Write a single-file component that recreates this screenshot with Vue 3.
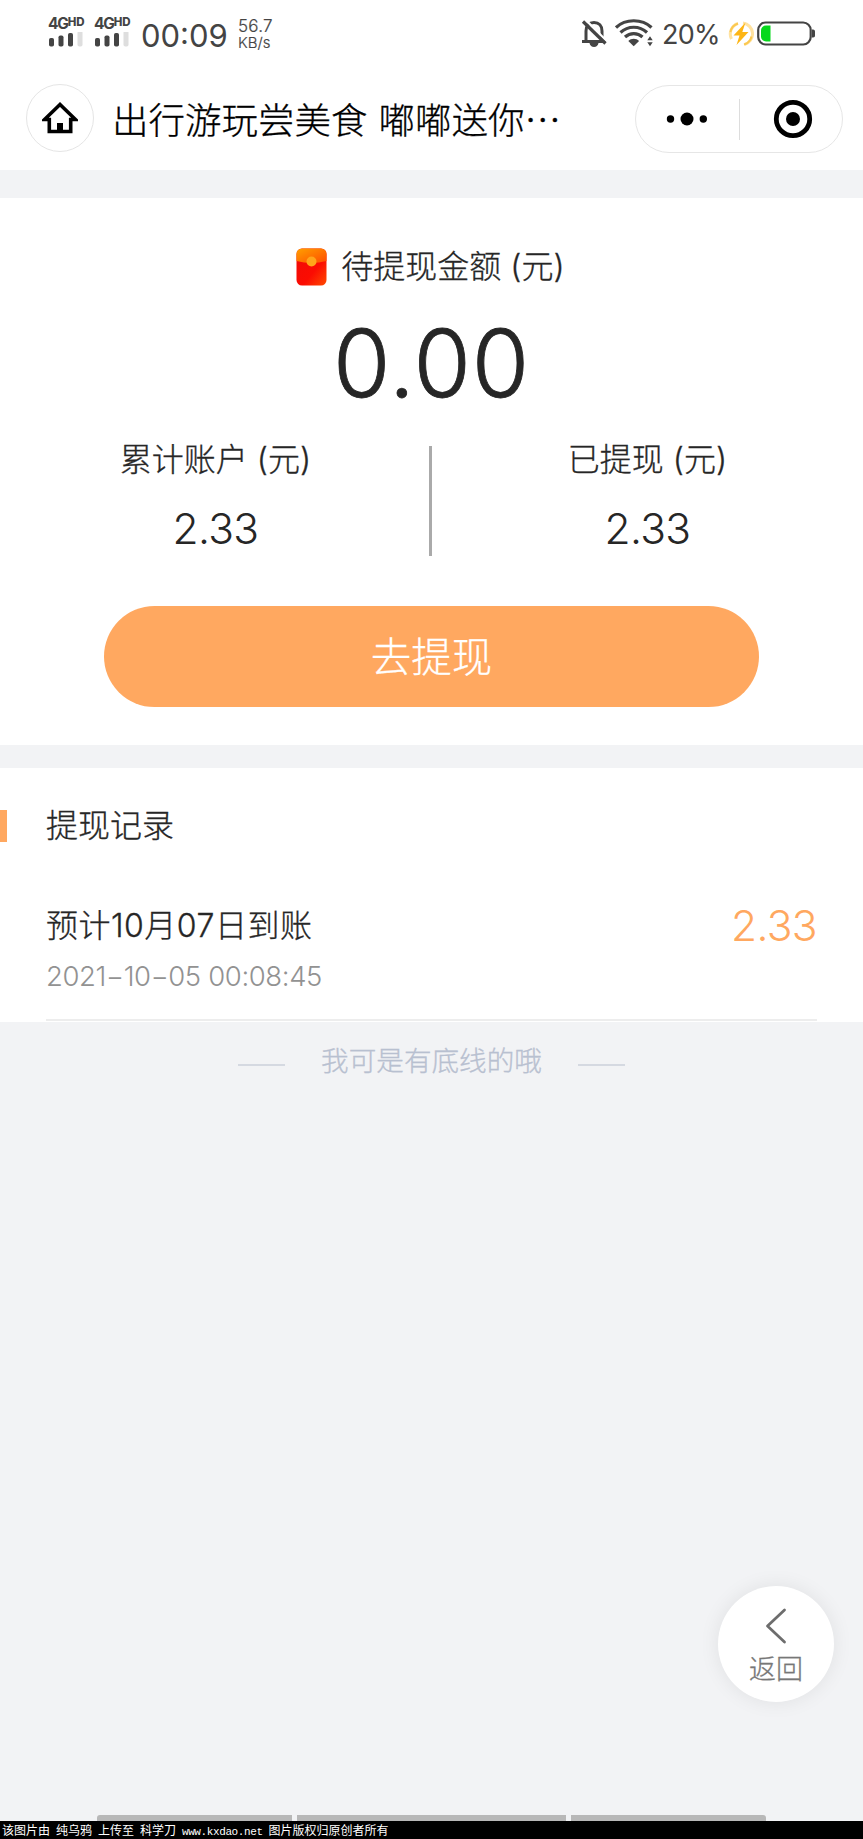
<script setup>
const totals = [
  { label: '累计账户 (元)', value: '2.33' },
  { label: '已提现 (元)', value: '2.33' }
]
const records = [{ title: '预计10月07日到账', time: '2021−10−05 00:08:45', amount: '2.33' }]
</script>

<template>
  <div class="page">
    <header class="status">
      <div v-for="n in 2" :key="n" class="signal">
        <div class="net">4G<sup>HD</sup></div>
        <svg width="36" height="15" viewBox="0 0 36 15">
          <rect x="1" y="6" width="5" height="8.500" rx="1.800" fill="#444" />
          <rect x="10.500" y="3.500" width="5" height="11" rx="1.800" fill="#444" />
          <rect x="20" y="1" width="5" height="13.500" rx="1.800" fill="#444" />
          <rect x="29.500" y="-1" width="5" height="15.500" rx="1.800" fill="#dedede" />
        </svg>
      </div>
      <div class="clock">00:09</div>
      <div class="speed"><span>56.7</span><span>KB/s</span></div>
      <div class="grow"></div>
      <svg class="bell" width="26" height="28" viewBox="0 0 26 28" fill="none" stroke="#444" stroke-width="3">
        <path d="M5 21V11c0-5 3-8.500 8-8.500s8 3.500 8 8.500v10" />
        <path d="M1 21.500h24" />
        <path d="M8.500 23h9c-.5 2.600-2.200 4-4.500 4s-4-1.400-4.500-4z" fill="#444" stroke="none" />
        <path d="M2.500 1.500l22 22" stroke="#fff" stroke-width="2.500" transform="translate(1.800 -1.800)" />
        <path d="M2 1.500l22.500 22" stroke-width="3.200" />
      </svg>
      <svg class="wifi" width="38" height="28" viewBox="0 0 38 28" fill="none" stroke="#444" stroke-width="3.200">
        <path d="M1 8.500C10.500-.5 27-.5 36.500 8.500" />
        <path d="M5.500 13.500c7.500-7 19-7 26.500 0" />
        <path d="M10 18c5-4.500 12.500-4.500 17.500 0" />
        <path d="M13.300 22c3-2.900 7.800-2.900 10.800 0l-5.400 5.200z" fill="#444" stroke="none" />
        <path d="M32.300 21.300l2.700-4 2.700 4zM32.300 23.300l2.700 4 2.700-4z" fill="#444" stroke="none" />
      </svg>
      <div class="percent">20%</div>
      <svg class="bolt" width="26" height="26" viewBox="0 0 26 26" fill="none">
        <path d="M10 2.500A11 11 0 0 0 3.500 18" stroke="#ffe2a0" stroke-width="3" />
        <path d="M15 2a11 11 0 0 1 1.500 21.500" stroke="#ffe2a0" stroke-width="3" />
        <path d="M10 2.500A11 11 0 0 0 2.500 11M16 23.500a11 11 0 0 0 7.500-8" stroke="#fbc850" stroke-width="2" />
        <path d="M17.500 1.500L5.500 14.500h6L8.500 24 20.500 11h-6.200z" fill="#fdb515" />
      </svg>
      <svg class="battery" width="59" height="25" viewBox="0 0 59 25">
        <rect x="1.200" y="1.500" width="52.500" height="22" rx="7.500" fill="#fff" stroke="#444" stroke-width="2.200" />
        <path d="M13.500 4.500v16H9a5 5 0 0 1-5-5v-6a5 5 0 0 1 5-5z" fill="#06d81c" />
        <path d="M55 8.500h1c1.500 0 2 1 2 2v4c0 1-.5 2-2 2h-1z" fill="#444" />
      </svg>
    </header>

    <nav class="nav">
      <div class="home">
        <svg width="36" height="32" viewBox="0 0 36 32">
          <path d="M18 2.500L2.500 17.500h4.800V29.500h21.400V17.500h4.800z" fill="none" stroke="#000" stroke-width="3.600" />
          <path d="M15 21h6v9h-6z" />
        </svg>
      </div>
      <div class="title">出行游玩尝美食 嘟嘟送你…</div>
      <div class="capsule">
        <svg class="more" width="42" height="14" viewBox="0 0 42 14">
          <circle cx="4.500" cy="7" r="3.700" /><circle cx="21" cy="7" r="6.500" /><circle cx="37.300" cy="7" r="3.700" />
        </svg>
        <i class="split"></i>
        <svg class="target" width="40" height="40" viewBox="0 0 40 40">
          <circle cx="20" cy="20" r="16.700" fill="none" stroke="#000" stroke-width="4.800" />
          <circle cx="20" cy="20" r="7" />
        </svg>
      </div>
    </nav>

    <main>
      <section class="account">
        <div class="pending">
          <svg width="31" height="38" viewBox="0 0 31 38">
            <defs>
              <linearGradient id="body" x1="0" y1="0" x2="1" y2="1">
                <stop offset="0" stop-color="#f00b08" /><stop offset=".6" stop-color="#fb0c02" /><stop offset="1" stop-color="#ff4b00" />
              </linearGradient>
              <linearGradient id="flap" x1="0" y1="0" x2="1" y2="1">
                <stop offset="0" stop-color="#ffa000" /><stop offset="1" stop-color="#ff4c00" />
              </linearGradient>
            </defs>
            <rect x=".5" y=".5" width="30" height="37" rx="5.500" fill="url(#body)" />
            <path d="M.5 13V6A5.500 5.500 0 0 1 6 .5h19A5.500 5.500 0 0 1 30.500 6v7Q15.500 17 .5 13z" fill="url(#flap)" />
            <circle cx="15.500" cy="13.500" r="5" fill="#ffa51a" />
          </svg>
          <span>待提现金额 (元)</span>
        </div>
        <div class="balance">0.00</div>
        <div class="totals">
          <div v-for="item in totals" :key="item.label" class="total">
            <div class="label">{{ item.label }}</div>
            <div class="value">{{ item.value }}</div>
          </div>
        </div>
        <button class="withdraw">去提现</button>
      </section>

      <section class="records">
        <h2>提现记录</h2>
        <div v-for="r in records" :key="r.time" class="record">
          <div>
            <div class="name">{{ r.title }}</div>
            <div class="time">{{ r.time }}</div>
          </div>
          <div class="amount">{{ r.amount }}</div>
        </div>
      </section>

      <div class="end"><i></i><span>我可是有底线的哦</span><i></i></div>
    </main>

    <button class="back">
      <svg width="24" height="38" viewBox="0 0 24 38" fill="none" stroke="#6d6d6d" stroke-width="2.800" stroke-linecap="round" stroke-linejoin="round">
        <path d="M20.500 3L3.500 19l17 16" />
      </svg>
      <span>返回</span>
    </button>

    <div class="gesture"><i></i><i class="wide"></i><i></i></div>
    <footer>该图片由 纯乌鸦 上传至 科学刀 <span>www.kxdao.net</span> 图片版权归原创者所有</footer>
  </div>
</template>

<style>
body { margin: 0; background: #f2f3f5; }
</style>

<style scoped>
* { box-sizing: border-box; }
svg { display: block; flex: none; }
.page {
  position: relative;
  display: flex;
  flex-direction: column;
  width: 863px;
  height: 1839px;
  overflow: hidden;
  background: #f2f3f5;
  color: #262626;
  font-family: Inter, "Noto Sans CJK SC", sans-serif;
  font-weight: 300;
}
.title, .pending, .label, .withdraw, h2, .name, .end, .back { -webkit-text-stroke: .3px currentColor; }
.status { display: flex; height: 70px; padding: 0 47px 0 48px; background: #fff; color: #444; }
.signal { width: 36px; margin-right: 10px; padding-top: 15px; }
.net { height: 17px; font: 700 15.5px/17px Inter, sans-serif; letter-spacing: -1.2px; white-space: nowrap; }
.net sup { display: inline-block; font-size: 11.5px; font-weight: 800; line-height: 10px; vertical-align: 3.5px; letter-spacing: 0; }
.clock { width: 98px; padding-left: 1px; font-size: 31px; font-weight: 400; line-height: 71px; white-space: nowrap; }
.speed { display: flex; flex-direction: column; padding-top: 18px; font-size: 17px; line-height: 17px; letter-spacing: .2px; font-weight: 300; -webkit-text-stroke: .2px currentColor; }
.speed span:last-child { font-size: 15px; line-height: 16px; letter-spacing: 0; }
.grow { flex: 1; }
.bell { margin: 20px 8px 0 0; }
.wifi { margin: 19px 9px 0 0; }
.percent { width: 66px; font-size: 27px; font-weight: 400; line-height: 70px; letter-spacing: -.8px; }
.bolt { margin: 21px 3px 0 0; }
.battery { margin: 21px 0 0; }

.nav { display: flex; height: 100px; padding: 14px 20px 0 26px; background: #fff; }
.home { display: flex; align-items: center; justify-content: center; width: 68px; height: 68px; border: 1.5px solid #e5e5e5; border-radius: 50%; }
.title { flex: 1; padding-left: 18px; color: #000; font: 300 36.5px/70px "Noto Sans CJK SC", sans-serif; word-spacing: 3px; white-space: nowrap; }
.capsule { display: flex; align-items: center; width: 208px; height: 68px; margin-top: 1px; border: 1.5px solid #e6e6e6; border-radius: 34px; }
.more { margin-left: 30px; }
.split { width: 1px; height: 41px; margin-left: 31px; background: #ddd; }
.target { margin-left: 33px; }

.account { height: 547px; margin-top: 28px; padding-top: 50px; background: #fff; }
.pending { display: flex; justify-content: center; gap: 14px; height: 40px; padding-right: 2px; font-size: 32px; line-height: 38px; }
.balance { height: 110px; margin-top: 20px; text-align: center; font-size: 93px; line-height: 111px; letter-spacing: .8px; -webkit-text-stroke: .8px currentColor; }
.totals { display: flex; height: 110px; margin-top: 28px; }
.total { width: 431px; text-align: center; }
.total + .total { border-left: 3px solid #aaa; margin-left: -2px; width: 434px; }
.label { font-size: 32px; line-height: 28px; }
.value { margin-top: 32px; font-size: 42.5px; line-height: 46px; letter-spacing: -.6px; }
button { padding: 0; border: 0; font-family: inherit; font-weight: 300; }
.withdraw { display: block; width: 655px; height: 101px; margin: 50px 0 0 104px; border-radius: 51px; background: #ffa860; color: #fff; font-size: 40.5px; line-height: 103px; }

.records { height: 254px; margin-top: 23px; padding: 42px 46px 0; background: #fff; }
h2 { height: 32px; margin: 0 0 0 -46px; padding-left: 39px; border-left: 7px solid #ffa860; font-size: 32px; font-weight: 300; line-height: 32px; }
.record { display: flex; justify-content: space-between; width: 771px; height: 179px; padding-top: 60px; border-bottom: 2px solid #ededed; }
.name { font-size: 32px; line-height: 48px; letter-spacing: .5px; }
.time { margin-top: 5px; color: #929292; font-size: 27.5px; line-height: 42px; letter-spacing: -.38px; white-space: pre; }
.amount { color: #ffa860; font-size: 42.5px; line-height: 48px; letter-spacing: -.6px; }
.end { display: flex; justify-content: center; gap: 36px; margin-top: 18px; color: #b8c0d0; font-size: 27.6px; line-height: 43px; }
.end i { width: 47px; height: 2px; margin-top: 24px; background: #d5d9e1; }

.back { position: absolute; left: 718px; top: 1586px; display: flex; flex-direction: column; align-items: center; width: 116px; height: 116px; padding-top: 21px; border-radius: 50%; background: #fff; box-shadow: 0 0 20px rgba(0, 0, 0, .08); color: #777; font-size: 27px; line-height: 40px; }
.back span { margin-top: 5px; }
.gesture { display: flex; gap: 5px; height: 6px; margin: auto 0 0 97px; }
.gesture i { width: 195px; background: #b8b8b8; border-radius: 3px 0 0 0; }
.gesture i:last-child { border-radius: 0 3px 0 0; }
.gesture .wide { width: 269px; border-radius: 0; }
footer { height: 18px; padding-left: 2px; background: #000; color: #fff; font: 400 12px/17px "Noto Sans CJK SC", sans-serif; word-spacing: 3.3px; white-space: nowrap; }
footer span { font: 11px/17px "Liberation Mono", monospace; letter-spacing: -.4px; }
</style>
